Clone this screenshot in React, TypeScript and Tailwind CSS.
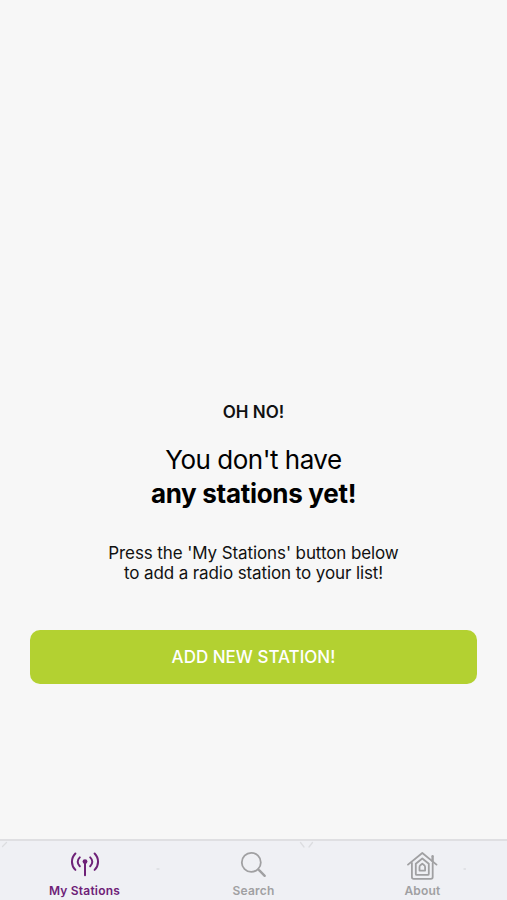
import React from "react"
import { clsx } from "clsx"

function StationsIcon() {
  return (
    <svg width="32" height="30" viewBox="0 0 32 30" fill="none" stroke="currentColor" strokeWidth="2" strokeLinecap="round">
      <path d="M6.4 3.5C1.8 8.1 1.8 15.3 6.4 19.9" />
      <path d="M10.8 7.4c-2.8 2.7-2.8 6.2 0 8.9" />
      <path d="M21.2 7.4c2.8 2.7 2.8 6.2 0 8.9" />
      <path d="M25.6 3.5c4.6 4.6 4.6 11.8 0 16.4" />
      <path d="M16 12v13.2" />
      <circle cx="16" cy="11.6" r="2.4" fill="currentColor" stroke="none" />
    </svg>
  )
}

function SearchIcon() {
  return (
    <svg width="32" height="30" viewBox="0 0 32 30" fill="none" stroke="currentColor" strokeWidth="1.8" strokeLinecap="round">
      <circle cx="13.3" cy="12.4" r="9.5" />
      <path d="M20.2 19.4l1.2 1.2" />
      <path d="M21.6 20.6l5.1 5.2" strokeWidth="2.4" />
    </svg>
  )
}

function HomeIcon() {
  return (
    <svg
      width="32"
      height="30"
      viewBox="0 0 32 30"
      fill="none"
      stroke="currentColor"
      strokeWidth="1.8"
      strokeLinecap="round"
      strokeLinejoin="round"
    >
      <path d="M1 14.6L15.3 3l14.2 11.6" />
      <path d="M25.6 11V6.3" strokeWidth="2.4" />
      <path d="M4.9 13v14q0 1.8 1.8 1.8h17.2q1.8 0 1.8-1.8V13" />
      <path d="M8.8 23.9V13.7l6.5-5.2 6.5 5.2v10.2q0 1-1 1h-11q-1 0-1-1z" />
      <path d="M12.5 20.6v-3.4q0-1.2.9-2l1.9-1.6 1.9 1.6q.9.8.9 2v3.4z" />
    </svg>
  )
}

const tabs = [
  { label: "My Stations", icon: StationsIcon, active: true },
  { label: "Search", icon: SearchIcon, active: false },
  { label: "About", icon: HomeIcon, active: false },
]

// Faint specks in the bar's backdrop
function BarTexture() {
  return (
    <svg
      className="pointer-events-none absolute inset-0"
      width="507"
      height="59"
      viewBox="0 0 507 59"
      fill="none"
      stroke="#dcdde0"
      strokeWidth="1.3"
      strokeLinecap="round"
      aria-hidden="true"
    >
      <path d="M2.5 5.5L6.5 1.5" />
      <path d="M300.5 1.5l3.5 4.5M312.5 1.5L309 6" />
      <path d="M157 28h2M464 28h1.5" />
    </svg>
  )
}

function TabBar() {
  return (
    <nav className="relative grid h-[61px] shrink-0 grid-cols-3 border-t-2 border-[#dfdfe2] bg-[#eff0f4]">
      <BarTexture />
      {tabs.map(({ label, icon: Icon, active }) => (
        <button
          key={label}
          type="button"
          className={clsx("flex flex-col items-center pt-[9px]", active ? "text-[#6e2177]" : "text-[#a0a0a2]")}
        >
          <Icon />
          <span className="mt-[3px] text-[12px] leading-[16px] font-semibold tracking-[0.2px]">{label}</span>
        </button>
      ))}
    </nav>
  )
}

export default function App() {
  return (
    <div className="flex h-[900px] w-[507px] flex-col overflow-hidden bg-[#f7f7f7] font-['Inter',sans-serif] text-[#111]">
      <main className="flex flex-1 flex-col px-[30px] pt-[402px] text-center">
        <h2 className="text-[17px] leading-[20px] font-semibold">OH NO!</h2>
        <h1 className="mt-[21px] text-[26px] leading-[34px] tracking-[-0.5px] text-black">
          You don't have
          <br />
          <strong className="font-bold tracking-[-0.3px]">any stations yet!</strong>
        </h1>
        <p className="mt-[32px] text-[17px] leading-[20px] tracking-[-0.1px]">
          Press the 'My Stations' button below
          <br />
          to add a radio station to your list!
        </p>
        <button
          type="button"
          className="mt-[47px] h-[54px] w-full rounded-[10px] bg-[#b3d131] pt-[2px] text-[17px] font-medium text-white"
        >
          ADD NEW STATION!
        </button>
      </main>
      <TabBar />
    </div>
  )
}
